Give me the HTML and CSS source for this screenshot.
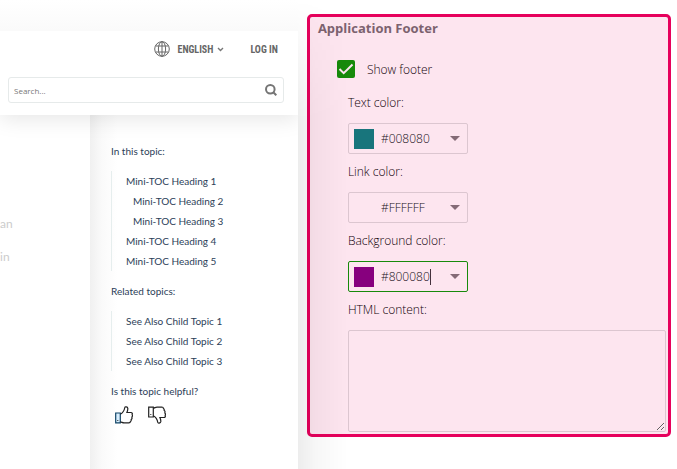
FILE: index.html
```html
<!DOCTYPE html>
<html lang="en">
<head>
<meta charset="utf-8">
<title>Application Footer</title>
<link rel="stylesheet" href="styles.css">
</head>
<body>
<div class="page">
  <section class="preview">
    <header class="site-header">
      <nav class="site-nav">
        <button class="language" type="button">
          <svg class="globe" viewBox="0 0 16 16" aria-hidden="true"><circle cx="8" cy="8" r="7.3"/><ellipse cx="8" cy="8" rx="3.6" ry="7.3"/><path d="M8 .7v14.6M1.700 5h12.600M1.700 11h12.600"/></svg>
          <span>ENGLISH</span>
          <svg class="chevron" viewBox="0 0 7 5" aria-hidden="true"><path d="M1 1l2.500 2.500L6 1"/></svg>
        </button>
        <a class="login" href="#login">LOG IN</a>
      </nav>
      <form class="search">
        <input class="search-input" type="text" placeholder="Search..." aria-label="Search">
        <button class="search-button" type="button" aria-label="Search">
          <svg viewBox="0 0 12 12" aria-hidden="true"><circle cx="5.300" cy="5.300" r="4.300"/><path d="M8.300 8.300l3 3"/></svg>
        </button>
      </form>
    </header>
    <div class="site-body">
      <main class="article"><p>an</p><p>in</p></main>
      <aside class="topics">
        <h2>In this topic:</h2>
        <ul>
          <li><a href="#h1">Mini-TOC Heading 1</a></li>
          <li class="nested"><a href="#h2">Mini-TOC Heading 2</a></li>
          <li class="nested"><a href="#h3">Mini-TOC Heading 3</a></li>
          <li><a href="#h4">Mini-TOC Heading 4</a></li>
          <li><a href="#h5">Mini-TOC Heading 5</a></li>
        </ul>
        <h2>Related topics:</h2>
        <ul>
          <li><a href="#t1">See Also Child Topic 1</a></li>
          <li><a href="#t2">See Also Child Topic 2</a></li>
          <li><a href="#t3">See Also Child Topic 3</a></li>
        </ul>
        <h2>Is this topic helpful?</h2>
        <div class="votes">
          <button type="button" aria-label="Yes">
            <svg viewBox="0 0 18 18" aria-hidden="true"><path class="cuff" d="M.7 7h4.600v9.800H.7z"/><path d="M5.300 8.200C7.600 7 9.200 5 9.800 1.500c.2-1 2.700-.9 3 .8.200 1.500-.4 2.800-.9 4.200h4c1.500 0 1.700 1.400 1.200 2.200.6.800.4 1.900-.3 2.400.4.900.1 1.900-.6 2.300.2 1-.1 1.800-.8 2.200 0 1-.7 1.300-1.600 1.300H9c-1.500 0-2.300-.9-3.700-1"/><path d="M2.300 14.500h1"/></svg>
          </button>
          <button type="button" aria-label="No">
            <svg viewBox="0 0 18 18" aria-hidden="true"><path d="M.7 1.200h4.600V11H.7z"/><path d="M5.300 9.800c2.300 1.200 3.900 3.200 4.500 6.700.2 1 2.700.9 3-.8.200-1.500-.4-2.800-.9-4.200h4c1.500 0 1.700-1.400 1.200-2.200.6-.8.400-1.900-.3-2.400.4-.9.100-1.900-.6-2.300.2-1-.1-1.800-.8-2.200 0-1-.7-1.300-1.600-1.300H9c-1.500 0-2.300.9-3.700 1"/><path d="M2.300 8.500h1"/></svg>
          </button>
        </div>
      </aside>
    </div>
  </section>

  <form class="settings">
    <h1>Application Footer</h1>
    <div class="check">
      <span class="box">
        <input id="show-footer" type="checkbox" checked>
        <svg viewBox="0 0 18 18" aria-hidden="true"><path d="M2.500 9l4.200 4.200L15.500 4.500"/></svg>
      </span>
      <label for="show-footer">Show footer</label>
    </div>
    <div class="fields">
      <label for="text-color">Text color:</label>
      <div class="color-field">
        <span class="swatch teal"></span>
        <input id="text-color" type="text" value="#008080">
        <button type="button" aria-label="Choose text color"></button>
      </div>
      <label for="link-color">Link color:</label>
      <div class="color-field">
        <span class="swatch"></span>
        <input id="link-color" type="text" value="#FFFFFF">
        <button type="button" aria-label="Choose link color"></button>
      </div>
      <label for="background-color">Background color:</label>
      <div class="color-field active">
        <span class="swatch purple"></span>
        <input id="background-color" type="text" value="#800080">
        <button type="button" aria-label="Choose background color"></button>
      </div>
      <label for="html-content">HTML content:</label>
      <textarea id="html-content"></textarea>
    </div>
  </form>
</div>
</body>
</html>
```
FILE: styles.css
```css
* { box-sizing: border-box; }

body {
  margin: 0;
  background: #fff;
  font-family: "Open Sans", "Noto Sans", sans-serif;
}

button {
  padding: 0;
  border: 0;
  background: none;
}

a { color: inherit; text-decoration: none; }

svg { display: block; fill: none; }

.page {
  display: flex;
  min-height: 100vh;
  overflow: hidden;
}

/* Site preview */
.preview {
  display: flex;
  flex-direction: column;
  flex: 0 0 44%;
  padding-top: 31px;
  background: linear-gradient(#fff, #fafafa 31px, #fff 32px);
}

.site-header {
  position: relative;
  padding: 8px 14px 12px 8px;
  background: #fff;
  box-shadow: 0 4px 20px rgba(0, 0, 0, 0.1);
  clip-path: inset(0 0 -30px 0);
}

.site-nav {
  display: flex;
  justify-content: flex-end;
  align-items: center;
  gap: 26px;
  height: 20px;
  padding-right: 6px;
  color: #666;
}

.language, .login {
  font: bold 10px "Roboto Condensed", "Liberation Sans Narrow", Roboto, sans-serif;
  color: inherit;
}

.language { display: flex; align-items: center; gap: 4px; }

.globe {
  width: 16px;
  height: 16px;
  margin-right: 3px;
  stroke: #666;
}

.chevron { width: 7px; height: 5px; stroke: #777; stroke-width: 1.4; }

.search {
  display: flex;
  align-items: center;
  height: 26px;
  margin-top: 18px;
  padding: 0 6px 0 5px;
  border: 1px solid #e6eaea;
  border-radius: 3px;
}

.search-input {
  flex: 1;
  min-width: 0;
  padding: 0;
  border: 0;
  outline: 0;
  background: none;
  font: 8px "Open Sans", sans-serif;
  color: #666;
}

.search-input::placeholder { color: #777; }

.search-button svg {
  width: 12px;
  height: 12px;
  stroke: #757575;
  stroke-width: 2;
}

.site-body { display: flex; flex: 1; }

.article {
  flex: 0 0 90px;
  padding-top: 92px;
  font: 12px/33px Lato, sans-serif;
  color: #ccc;
}

.article p { margin: 0; }

.topics {
  flex: 1;
  padding: 26px 21px;
  background: linear-gradient(90deg, #f0f0f0, #fafafa 12px, #fff 28px);
  font: 10px/20px Lato, sans-serif;
  color: #2c3e58;
}

.topics h2 { margin: 0; font: inherit; }

.topics ul {
  margin: 10px 0;
  padding: 0 0 0 14px;
  border-left: 1px solid #e6eeee;
  list-style: none;
}

.topics .nested { padding-left: 7px; }

.votes {
  display: flex;
  gap: 15px;
  padding: 5px 4px;
}

.votes svg {
  width: 18px;
  height: 18px;
  stroke: #222;
  stroke-width: 1.2;
}

.votes .cuff { stroke: #146; fill: #d8efff; }

/* Shadow that the preview casts over the settings */
.page::after {
  content: "";
  position: absolute;
  top: 0;
  bottom: 0;
  left: 44%;
  width: 50px;
  background: linear-gradient(90deg, rgba(0, 0, 0, 0.07), rgba(0, 0, 0, 0.03) 18px, transparent);
  mask-image: linear-gradient(transparent, #000 120px);
  pointer-events: none;
}

/* Settings panel */
.settings {
  flex: 1;
  align-self: flex-start;
  min-width: 0;
  margin: 14px 6px 0 9px;
  padding: 1px 2px 2px 8px;
  border: 3px solid #e6005c;
  border-radius: 5px;
  background: #fde5ef;
  font-size: 12px;
  font-weight: 300;
  line-height: 20px;
  color: #100008;
}

.settings h1 {
  margin: 0;
  font-size: 13px;
  line-height: 20px;
  color: #7c626f;
}

.check {
  display: flex;
  align-items: flex-start;
  gap: 12px;
  margin: 22px 0 13px 19px;
}

.box { display: grid; }

.box > * { grid-area: 1 / 1; width: 18px; height: 18px; }

.box input {
  appearance: none;
  margin: 0;
  border-radius: 2px;
  background: #178a0b;
}

.box svg {
  position: relative;
  stroke: #fde5ef;
  stroke-width: 2;
  pointer-events: none;
}

.fields {
  display: flex;
  flex-direction: column;
  align-items: flex-start;
  margin-left: 30px;
}

.color-field {
  display: flex;
  align-items: center;
  width: 120px;
  height: 31px;
  margin: 10px 0 8px;
  padding: 0 7px 0 5px;
  border: 1px solid #dcc6d0;
  border-radius: 2px;
}

.color-field.active { border-color: #178a0b; }

.swatch { width: 20px; height: 20px; margin-right: 7px; }

.teal { background: #18757c; }

.purple { background: #87007e; }

.color-field input {
  width: 50px;
  height: 16px;
  padding: 0;
  border: 0;
  outline: 0;
  background: none;
  font: inherit;
  color: #20101a;
}

.color-field.active input { border-right: 1px solid #44313c; }

.color-field button {
  margin-left: auto;
  border: solid transparent;
  border-width: 5px 5px 0;
  border-top-color: #846a76;
}

.settings textarea {
  width: 100%;
  height: 102px;
  margin-top: 10px;
  border: 1px solid #dcc6d0;
  border-radius: 2px;
  outline: 0;
  background: none;
  font: inherit;
  resize: vertical;
}
```
